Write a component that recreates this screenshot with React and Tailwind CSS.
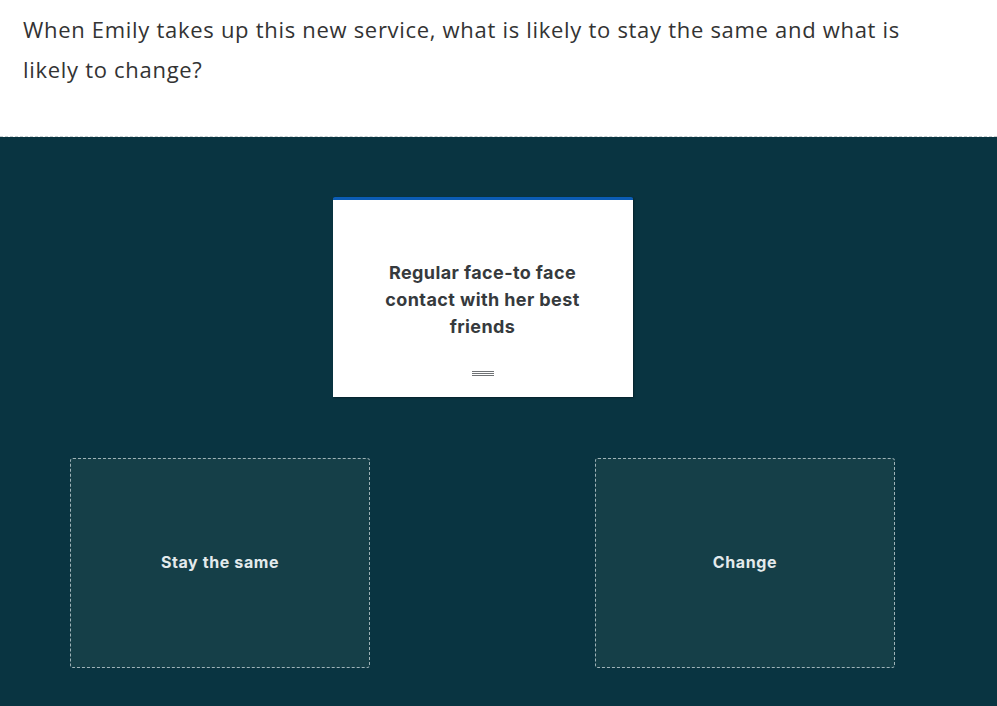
import React from "react";

const zones = ["Stay the same", "Change"];

function DropZone({ label }) {
  return (
    <div className="w-[300px] h-[210px] flex items-center justify-center bg-[#153f48] border border-dashed border-[#9fb3b8] rounded-[3px]">
      <span className="text-[16px] leading-[20px] pb-[2px] font-bold text-[#e3eaec] tracking-[0.6px]">{label}</span>
    </div>
  );
}

export default function App() {
  return (
    <div className="min-h-screen bg-[#093441]">
      {/* question */}
      <div className="bg-white px-[23px] pt-[9px] pb-[47px] border-b border-dashed border-[#c8cfd1]">
        <p className="text-[22px] leading-[40px] text-[#333] w-[900px] tracking-[0.7px]" style={{ fontFamily: "'Open Sans', Lato, sans-serif" }}>
          When Emily takes up this new service, what is likely to stay the same and what is likely to change?
        </p>
      </div>

      {/* drag area */}
      <div className="pt-[60px] w-[965px]" style={{ fontFamily: "Inter, 'Noto Sans', sans-serif" }}>
        <div className="flex justify-center">
          <div className="w-[300px] h-[200px] bg-white border-t-[3px] border-[#0b5cb5] rounded-t-[2px] shadow-[1px_1px_2px_rgba(0,0,0,0.35)] flex flex-col items-center">
            <div className="flex-1 flex items-center justify-center px-[38px] pt-[28px]">
              <p className="text-center text-[18px] leading-[27px] font-bold text-[#363a3d] tracking-[0.4px]">
                Regular face-to face contact with her best friends
              </p>
            </div>
            <div className="pb-[21px] flex flex-col gap-[1px] w-[22px]">
              <div className="h-px bg-[#6f7275]" />
              <div className="h-px bg-[#6f7275]" />
              <div className="h-px bg-[#6f7275]" />
            </div>
          </div>
        </div>
        <div className="mt-[61px] pl-[70px] flex gap-[225px]">
          {zones.map((z) => (
            <DropZone key={z} label={z} />
          ))}
        </div>
      </div>
    </div>
  );
}
